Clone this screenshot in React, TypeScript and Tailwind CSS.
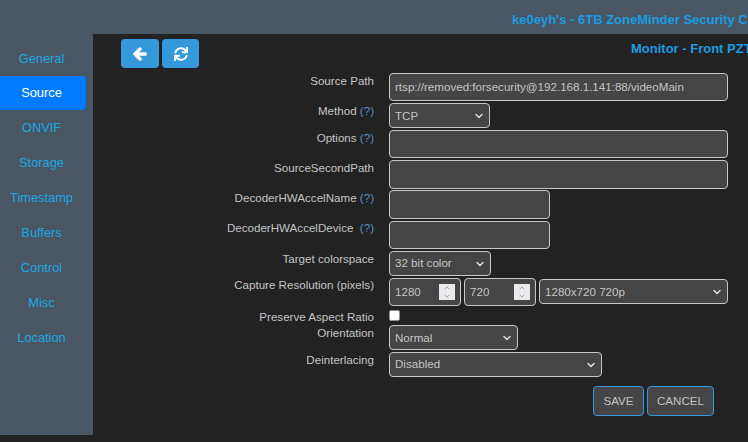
import { ChevronDown, ChevronUp } from "lucide-react";
import type { ReactNode } from "react";
import { FaSync } from "react-icons/fa";

const TABS = ["General", "Source", "ONVIF", "Storage", "Timestamp", "Buffers", "Control", "Misc", "Location"];

function Help() {
  return <span className="text-[#5a93c4]">(?)</span>;
}

function Row({ label, h, nudge, children }: { label: ReactNode; h: string; nudge?: boolean; children: ReactNode }) {
  return (
    <div className={`flex ${h}`}>
      <div className={`w-[281px] shrink-0 text-right text-[11.6px] leading-[16px] text-[#c4c4c4] ${nudge ? "-mt-[1px]" : ""}`}>{label}</div>
      <div className="ml-[15px] flex items-start gap-[3px]">{children}</div>
    </div>
  );
}

function Select({ value, w, raised }: { value: string; w: string; raised?: boolean }) {
  return (
    <div className={`relative flex h-[25px] ${w} items-center rounded-[4px] border border-[#c8c8c8] bg-[#454545] pl-[5px] text-[11.6px] text-[#c4c4c4] ${raised ? "pb-[2px]" : ""}`}>
      {value}
      <ChevronDown className="absolute right-[4px] top-[6px] text-[#dddddd]" size={12} strokeWidth={3} />
    </div>
  );
}

function Input({ value, w, h }: { value?: string; w: string; h: string }) {
  return (
    <div className={`flex ${h} ${w} items-center rounded-[4px] border border-[#c8c8c8] bg-[#454545] pl-[5px] text-[11.6px] text-[#c4c4c4]`}>
      {value}
    </div>
  );
}

function NumberInput({ value }: { value: string }) {
  return (
    <div className="relative flex h-[28px] w-[72px] items-center rounded-[4px] border border-[#c8c8c8] bg-[#454545] pl-[5px] text-[11.6px] text-[#c4c4c4]">
      {value}
      <div className="absolute right-[5px] top-[5px] flex h-[16px] w-[16px] flex-col items-center justify-center bg-[#e9e9ed] text-[#8a8794]">
        <ChevronUp size={8} strokeWidth={2} />
        <ChevronDown size={8} strokeWidth={2} />
      </div>
    </div>
  );
}

export default function App() {
  return (
    <div className="flex h-[442px] w-[748px] flex-col overflow-hidden bg-[#222222] font-['Liberation_Sans',sans-serif]">
      <header className="flex h-[34px] shrink-0 items-center overflow-hidden whitespace-nowrap bg-[#495663] pl-[512px] pt-[6px] text-[13px] font-bold text-[#1b9ce2]">
        ke0eyh's - 6TB ZoneMinder Security Camera System
      </header>
      <div className="flex flex-1">
        <nav className="mb-[7px] flex w-[93px] shrink-0 flex-col bg-[#495663] pt-[7px]">
          {TABS.map((tab) => (
            <a
              key={tab}
              className={`flex w-[86px] items-center justify-center rounded-r-[4px] pr-[3px] text-[12.8px] ${
                tab === "Source" ? "h-[34px] bg-[#007bff] text-white" : "h-[35px] text-[#1ea7e1]"
              }`}
            >
              {tab}
            </a>
          ))}
        </nav>
        <main className="min-w-0 flex-1 overflow-hidden">
          <div className="relative flex gap-[3px] pl-[28px] pt-[5px]">
            <button className="flex h-[29px] w-[38px] items-center justify-center rounded-[4px] bg-[#3498db] text-white">
              <svg width="14" height="14" viewBox="0 0 14 14" fill="none" stroke="currentColor" strokeWidth="3.4" strokeLinejoin="round" strokeLinecap="round">
                <path d="M7 2 2 7l5 5M3 7h9.300" />
              </svg>
            </button>
            <button className="flex h-[29px] w-[37px] items-center justify-center rounded-[4px] bg-[#3498db] text-white">
              <FaSync size={14} />
            </button>
            <h2 className="absolute left-[538px] top-[5px] whitespace-nowrap text-[13px] font-bold text-[#1b9ce2]">Monitor - Front PZT</h2>
          </div>
          <form className="mt-[5px]">
            <Row label="Source Path" h="h-[30px]"><Input value="rtsp://removed:forsecurity@192.168.1.141:88/videoMain" w="w-[339px]" h="h-[28px]" /></Row>
            <Row label={<>Method <Help /></>} h="h-[27px]"><Select value="TCP" w="w-[101px]" /></Row>
            <Row label={<>Options <Help /></>} h="h-[30px]"><Input w="w-[339px]" h="h-[28px]" /></Row>
            <Row label="SourceSecondPath" h="h-[30px]"><Input w="w-[339px]" h="h-[29px]" /></Row>
            <Row label={<>DecoderHWAccelName <Help /></>} h="h-[31px]"><Input w="w-[161px]" h="h-[29px]" /></Row>
            <Row label={<>DecoderHWAccelDevice&nbsp; <Help /></>} h="h-[30px]" nudge><Input w="w-[161px]" h="h-[28px]" /></Row>
            <Row label="Target colorspace" h="h-[27px]"><Select value="32 bit color" w="w-[102px]" raised /></Row>
            <Row label="Capture Resolution (pixels)" h="h-[32px]" nudge>
              <NumberInput value="1280" />
              <NumberInput value="720" />
              <div className="mt-[1px]"><Select value="1280x720 720p" w="w-[189px]" /></div>
            </Row>
            <Row label="Preserve Aspect Ratio" h="h-[15px]" nudge>
              <div className="h-[11px] w-[11px] rounded-[2px] border border-[#8f8f9d] bg-white" />
            </Row>
            <Row label="Orientation" h="h-[27px]"><Select value="Normal" w="w-[129px]" /></Row>
            <Row label="Deinterlacing" h="h-[34px]"><Select value="Disabled" w="w-[213px]" raised /></Row>
          </form>
          <div className="flex gap-[3px] pl-[500px]">
            <button className="h-[30px] w-[51px] rounded-[4px] border border-[#3498db] bg-[#454545] text-[11.6px] text-[#c4c4c4]">SAVE</button>
            <button className="h-[30px] w-[67px] rounded-[4px] border border-[#3498db] bg-[#454545] text-[11.6px] text-[#c4c4c4]">CANCEL</button>
          </div>
        </main>
      </div>
    </div>
  );
}
